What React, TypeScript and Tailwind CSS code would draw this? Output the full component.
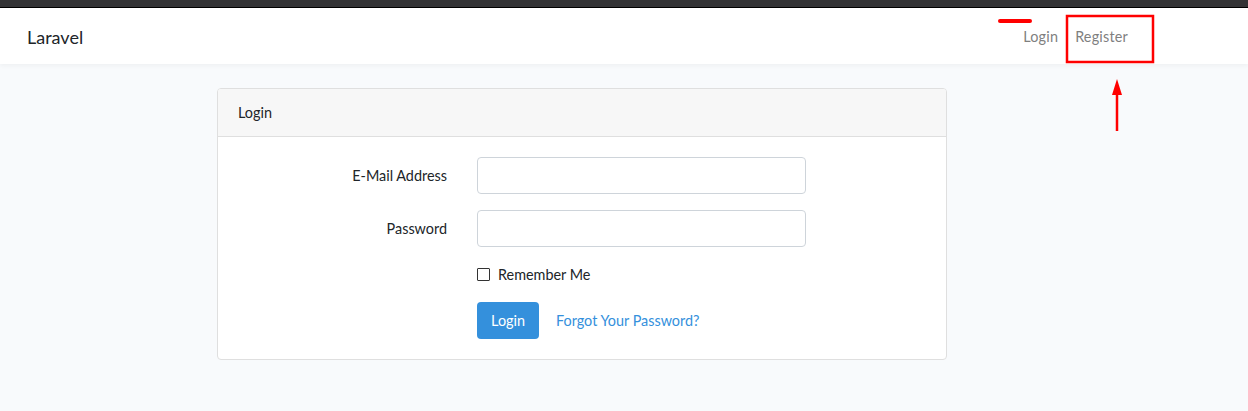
import React from "react";

const font = { fontFamily: "Lato, 'Noto Sans', sans-serif" };

const FormRow = ({ label, type }: { label: string; type: string }) => (
  <div className="flex items-center mb-4">
    <label className="w-[209px] pr-[30px] text-right text-[14.4px] text-[#212529] box-content">
      {label}
    </label>
    <input
      type={type}
      className="w-[329px] h-[37px] rounded-[4px] border border-[#ced4da] bg-white px-3"
    />
  </div>
);

const App = () => {
  return (
    <div className="relative w-[1248px] h-[411px] overflow-hidden bg-[#f8fafc]" style={font}>
      {/* browser bookmark strip, cropped */}
      <div className="h-[8px] bg-[#333335] border-b border-black flex items-start">
        <span className="ml-[36px] w-[8px] h-[2px] bg-white" />
        <span className="ml-[62px] w-[6px] h-[2px] bg-[#ccc]" />
        <span className="ml-[125px] w-[8px] h-[3px] bg-[#f5c542]" />
        <span className="ml-[150px] w-[4px] h-[2px] bg-[#ccc]" />
        <span className="ml-[26px] w-[4px] h-[2px] bg-[#ccc]" />
        <span className="ml-[84px] w-[7px] h-[2px] bg-[#ccc]" />
        <span className="ml-[390px] w-[8px] h-[2px] bg-[#ccc]" />
        <span className="ml-[16px] w-[3px] h-[3px] bg-[#2a6fd6]" />
        <span className="ml-[8px] w-[3px] h-[2px] bg-[#ccc]" />
        <span className="ml-[190px] w-[6px] h-[2px] bg-[#aaa]" />
        <span className="ml-[180px] w-[3px] h-[4px] bg-[#6b8e23]" />
      </div>

      {/* navbar */}
      <nav className="h-[56px] bg-white shadow-[0_2px_4px_rgba(0,0,0,0.04)] flex items-center pt-[2px]">
        <span className="ml-[27px] text-[18px] text-[#212529]">Laravel</span>
        <div className="ml-auto mr-[120px] flex items-center text-[14.4px] text-[#7f7f7f] tracking-[0.2px]">
          <a className="mr-[17px]">Login</a>
          <a>Register</a>
        </div>
      </nav>

      {/* card */}
      <div className="mt-[24px] ml-[217px] w-[730px] rounded-[4px] border border-[#dfdfdf] bg-white overflow-hidden">
        <div className="h-[48px] px-5 flex items-center bg-[#f7f7f7] border-b border-[#dfdfdf] text-[14.4px] text-[#212529]">
          Login
        </div>
        <div className="pt-[20px] pb-[20px] pl-[20px]">
          <FormRow label="E-Mail Address" type="email" />
          <FormRow label="Password" type="password" />
          <div className="flex items-center mb-4 h-[23px] pl-[239px]">
            <span className="w-[13px] h-[13px] border border-[#333] rounded-[1px] bg-white" />
            <span className="ml-[8px] text-[14.4px] text-[#212529]">Remember Me</span>
          </div>
          <div className="flex items-center pl-[239px]">
            <button className="w-[62px] h-[37px] rounded-[4px] bg-[#3490dc] text-white text-[14.4px]">
              Login
            </button>
            <a className="ml-[17px] text-[14.4px] text-[#3490dc]">Forgot Your Password?</a>
          </div>
        </div>
      </div>

      {/* screenshot annotations */}
      <svg className="absolute inset-0 pointer-events-none" width="1248" height="411">
        <rect x="998" y="19" width="34" height="4" rx="2" fill="#ff0000" />
        <rect x="1067" y="16" width="86" height="46" fill="none" stroke="#ff0000" strokeWidth="2.5" />
        <line x1="1117" y1="131" x2="1117" y2="90" stroke="#ff0000" strokeWidth="2.5" />
        <polygon points="1117,79 1112,95 1122,95" fill="#ff0000" />
      </svg>
    </div>
  );
};

export default App;
